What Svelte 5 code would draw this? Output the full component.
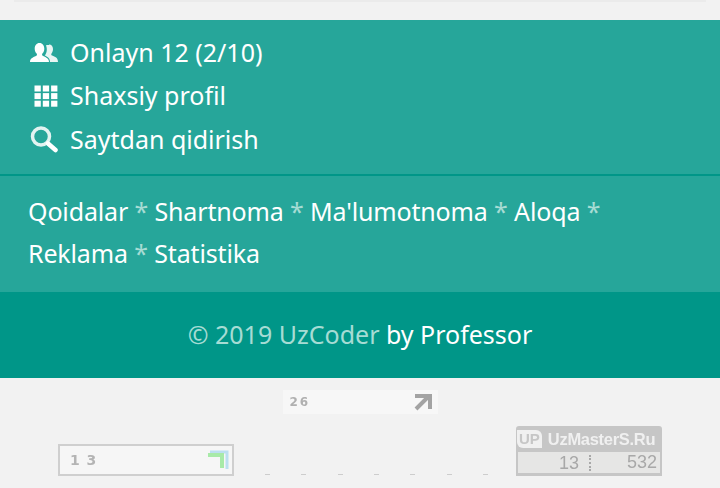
<script>
    const menu = [
        { icon: 'users', label: 'Onlayn 12 (2/10)' },
        { icon: 'grid', label: 'Shaxsiy profil' },
        { icon: 'search', label: 'Saytdan qidirish' }
    ];
    const links = ['Qoidalar', 'Shartnoma', "Ma'lumotnoma", 'Aloqa', 'Reklama', 'Statistika'];
    const squares = [0, 1, 2, 3, 4, 5, 6, 7, 8];
    const marks = [0, 1, 2, 3, 4, 5, 6];
</script>

<div class="page">
    <div class="topbox"></div>

    <section class="menu">
        {#each menu as item}
            <div class="row">
                <svg class="icon" viewBox="0 0 28 32" aria-hidden="true">
                    {#if item.icon === 'users'}
                        <path d="M0 26c0-3.500 2.500-4.500 6-6 1.200-.6 1.200-1.500.6-2.400C5.200 16 4.700 14.500 4.700 12.500 4.700 9.500 6.500 7 9.500 7s4.800 2.500 4.800 5.500c0 2-.5 3.500-1.900 5.100-.6.900-.5 1.800.7 2.400 3.300 1.500 5.900 2.500 5.900 6z" fill="#fff" />
                        <path d="M19 8.500c2.500 0 4 2 4 4.500 0 1.800-.5 3-1.500 4.500-.5 1-.3 1.600.6 2.100 3 1.200 5.900 2.200 5.900 6.400h-8c0-3.500-2-5-5.200-6.500 1.300-1.800 2-3.200 2-6 0-1.800-.3-3-.9-4 .9-.6 1.900-.5 3.100-.5z" fill="#e8f5f3" />
                    {:else if item.icon === 'grid'}
                        {#each squares as s}
                            <rect x={4.500 + (s % 3) * 8.300} y={6.500 + Math.floor(s / 3) * 7.600} width="6.300" height="6" fill="#fff" />
                        {/each}
                    {:else}
                        <circle cx="11" cy="13.500" r="8.500" fill="none" stroke="#e2f3f1" stroke-width="3.500" />
                        <path d="M18 20.500l7.500 6.500" stroke="#fff" stroke-width="4.500" stroke-linecap="round" />
                    {/if}
                </svg>
                <span>{item.label}</span>
            </div>
        {/each}
    </section>

    <section class="links">
        {#each links as link, i}
            <span class="link">{link}</span>{#if i < links.length - 1}{' '}<span class="star">*</span>{' '}{/if}
        {/each}
    </section>

    <footer class="copy">
        <span class="muted">© 2019 UzCoder</span>&nbsp;by Professor
    </footer>

    <div class="counters">
        <div class="counter-top">
            <div class="badge-26">
                <span>26</span>
                <svg viewBox="0 0 20 18" width="20" height="18" aria-hidden="true">
                    <path d="M2 3h15v13M16 3L3 16" fill="none" stroke="#a3a3a3" stroke-width="4" />
                </svg>
            </div>
        </div>
        <div class="counter-bottom">
            <div class="badge-13">
                <span>1 3</span>
                <svg viewBox="0 0 22 22" width="22" height="22" aria-hidden="true">
                    <path d="M3 3h17v17" fill="none" stroke="#bcdff0" stroke-width="3" />
                    <path d="M1 6h14v13" fill="none" stroke="#a8eaa8" stroke-width="4" />
                </svg>
            </div>
            <div class="marks">
                {#each marks as m}
                    <i></i>
                {/each}
            </div>
            <div class="badge-uz">
                <div class="uz-head">
                    <span class="uz-logo">UP</span>
                    <span class="uz-name">UzMasterS.Ru</span>
                </div>
                <div class="uz-nums">
                    <span class="n1">13</span>
                    <span class="n2">532</span>
                </div>
            </div>
        </div>
    </div>
</div>

<style>
    :global(body) {
        margin: 0;
        background: #f2f2f2;
    }
    .page {
        width: 720px;
        height: 488px;
        overflow: hidden;
        background: #f2f2f2;
        font-family: "Noto Sans", "Open Sans", sans-serif;
        font-size: 25px;
        color: #fff;
    }
    .topbox {
        height: 2px;
        margin: 0 14px 18px;
        background: #ebebeb;
    }
    .menu {
        background: #26a69a;
        padding: 10px 0 13.500px 30px;
        border-bottom: 2px solid #009688;
    }
    .row {
        display: flex;
        align-items: center;
        gap: 12px;
        height: 43.500px;
    }
    .icon {
        width: 28px;
        height: 32px;
        filter: blur(0.4px);
    }
    .links {
        background: #26a69a;
        padding: 14px 100px 18px 28px;
        line-height: 42px;
        height: 84px;
        letter-spacing: -0.15px;
    }
    .star {
        color: #a6dcd4;
    }
    .copy {
        background: #009688;
        height: 86px;
        box-sizing: border-box;
        padding-bottom: 2px;
        display: flex;
        align-items: center;
        justify-content: center;
    }
    .muted {
        color: #a6dcd4;
    }
    .counters {
        padding-top: 12px;
    }
    .counter-top {
        display: flex;
        justify-content: center;
    }
    .badge-26 {
        width: 155px;
        height: 24px;
        box-sizing: border-box;
        padding: 0 5px 0 7px;
        background: #f7f7f7;
        display: flex;
        align-items: center;
        justify-content: space-between;
        font-family: "DejaVu Sans", sans-serif;
        font-size: 12px;
        font-weight: bold;
        letter-spacing: 2px;
        color: #b0b0b0;
        filter: blur(0.6px);
    }
    .counter-bottom {
        display: flex;
        justify-content: center;
        align-items: flex-end;
        margin-top: 12px;
    }
    .badge-13 {
        width: 176px;
        height: 32px;
        box-sizing: border-box;
        border: 2px solid #cfcfcf;
        background: #f6f6f6;
        padding: 0 3px 0 10px;
        display: flex;
        align-items: center;
        justify-content: space-between;
        font-family: "DejaVu Sans", sans-serif;
        font-size: 14px;
        font-weight: bold;
        letter-spacing: 1px;
        color: #b4b4b4;
        filter: blur(0.6px);
    }
    .marks {
        width: 282px;
        box-sizing: border-box;
        padding: 0 28px 0 31px;
        display: flex;
        justify-content: space-between;
    }
    .marks i {
        width: 5px;
        height: 1px;
        margin-bottom: 1px;
        background: #cdcdcd;
    }
    .badge-uz {
        width: 146px;
        height: 50px;
        box-sizing: border-box;
        background: #c6c6c6;
        border-radius: 3px 3px 0 0;
        padding: 0 2px 3px;
        display: flex;
        flex-direction: column;
        font-family: "Liberation Sans", sans-serif;
        filter: blur(0.7px);
    }
    .uz-head {
        height: 30px;
        display: flex;
        align-items: center;
        gap: 6px;
    }
    .uz-logo {
        background: #f0f0f0;
        color: #c6c6c6;
        font-size: 15px;
        font-weight: bold;
        line-height: 18px;
        padding: 0 2px;
        margin-left: -1px;
        border-radius: 0 6px 0 6px;
    }
    .uz-name {
        font-size: 16.500px;
        font-weight: bold;
        color: #f0f0f0;
        white-space: nowrap;
        letter-spacing: -0.3px;
    }
    .uz-nums {
        flex: 1;
        background: #e6e6e5;
        display: flex;
        align-items: center;
        font-size: 18px;
        color: #a8a8a8;
    }
    .n1 {
        width: 73px;
        box-sizing: border-box;
        padding-right: 10px;
        text-align: right;
        border-right: 2px dotted #a8a8a8;
        line-height: 16px;
    }
    .n2 {
        flex: 1;
        text-align: right;
        padding-right: 3px;
    }
</style>
